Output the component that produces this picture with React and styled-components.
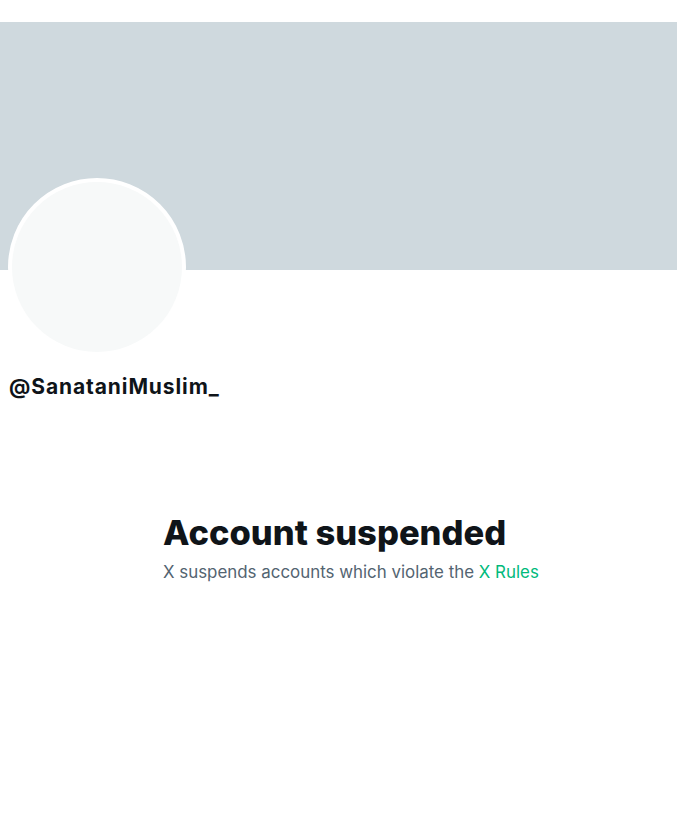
import React from "react";
import styled, { createGlobalStyle } from "styled-components";

const GlobalStyle = createGlobalStyle`
  body {
    margin: 0;
    background: #ffffff;
    font-family: Inter, "Noto Sans", sans-serif;
  }
`;

const App = () => {
  return (
    <Page>
      <GlobalStyle />
      <Banner />
      <ProfileHead>
        <Avatar />
        <Handle>@SanataniMuslim_</Handle>
      </ProfileHead>
      <EmptyState>
        <EmptyTitle>Account suspended</EmptyTitle>
        <EmptyText>
          X suspends accounts which violate the <RulesLink>X Rules</RulesLink>
        </EmptyText>
      </EmptyState>
    </Page>
  );
};

const Page = styled.div`
  width: 100%;
  min-height: 814px;
  padding-top: 22px;
  box-sizing: border-box;
  display: flex;
  flex-direction: column;
`;
const Banner = styled.div`
  width: 100%;
  height: 248px;
  background-color: #cfd9de;
`;
const ProfileHead = styled.div`
  display: flex;
  flex-direction: column;
  align-items: flex-start;
  padding: 0 8px;
`;
const Avatar = styled.div`
  margin-top: -92px;
  width: 170px;
  height: 170px;
  border: 4px solid #ffffff;
  border-radius: 50%;
  background-color: #f7f9f9;
`;
const Handle = styled.div`
  margin-top: 18px;
  padding-left: 1px;
  font-size: 21px;
  line-height: 26px;
  font-weight: 700;
  color: #0f1419;
  letter-spacing: 0.9px;
`;
const EmptyState = styled.div`
  width: 351px;
  margin: 113px auto 0;
  display: flex;
  flex-direction: column;
  gap: 9px;
`;
const EmptyTitle = styled.div`
  font-size: 34.5px;
  line-height: 40px;
  font-weight: 800;
  color: #0f1419;
  white-space: nowrap;
`;
const EmptyText = styled.div`
  font-size: 16.9px;
  line-height: 20px;
  color: #536471;
  white-space: nowrap;
`;
const RulesLink = styled.span`
  color: #00ba7c;
`;

export default App;
